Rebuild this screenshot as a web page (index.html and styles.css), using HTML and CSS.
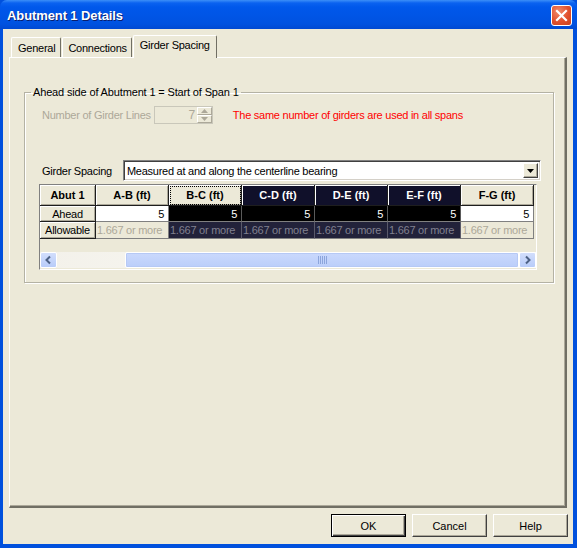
FILE: index.html
```html
<!DOCTYPE html>
<html>
<head>
<meta charset="utf-8">
<link rel="stylesheet" href="styles.css">
</head>
<body>
<div class="window">
  <div class="titlebar">
    <span class="title">Abutment 1 Details</span>
    <span class="close"><svg width="21" height="21" viewBox="0 0 21 21"><path d="M6 6 L15 15 M15 6 L6 15" stroke="#fff" stroke-width="2.2" stroke-linecap="square"/></svg></span>
  </div>
  <div class="frame">
    <div class="tabs">
      <div class="tab">General</div>
      <div class="tab conn">Connections</div>
      <div class="tab active">Girder Spacing</div>
    </div>
    <div class="panel">
      <fieldset class="group">
        <legend>Ahead side of Abutment 1 = Start of Span 1</legend>
        <div class="row row-lines">
          <span class="lbl disabled">Number of Girder Lines</span>
          <span class="spin">
            <span class="spin-val">7</span>
            <span class="spin-btns">
              <span class="sb"><svg width="7" height="4" viewBox="0 0 7 4"><path d="M3.5 0 L7 4 L0 4Z" fill="#ACA899"/></svg></span>
              <span class="sb"><svg width="7" height="4" viewBox="0 0 7 4"><path d="M0 0 L7 0 L3.5 4Z" fill="#ACA899"/></svg></span>
            </span>
          </span>
          <span class="red">The same number of girders are used in all spans</span>
        </div>
        <div class="row row-spacing">
          <span class="lbl">Girder Spacing</span>
          <span class="combo">
            <span class="combo-text">Measured at and along the centerline bearing</span>
            <span class="drop"><svg width="7" height="4" viewBox="0 0 7 4"><path d="M0 0 L7 0 L3.5 4Z" fill="#000"/></svg></span>
          </span>
        </div>
        <div class="grid">
          <table>
            <colgroup><col class="c0"><col class="c"><col class="c"><col class="c"><col class="c"><col class="c"><col class="c"></colgroup>
            <tr class="hdr">
              <th>Abut 1</th>
              <th>A-B (ft)</th>
              <th class="focus">B-C (ft)</th>
              <th class="dk">C-D (ft)</th>
              <th class="dk">D-E (ft)</th>
              <th class="dk">E-F (ft)</th>
              <th>F-G (ft)</th>
            </tr>
            <tr class="ahead">
              <th class="rh">Ahead</th>
              <td class="w">5</td>
              <td class="b">5</td>
              <td class="b">5</td>
              <td class="b">5</td>
              <td class="b">5</td>
              <td class="w">5</td>
            </tr>
            <tr class="allow">
              <th class="rh">Allowable</th>
              <td class="l">1.667 or more</td>
              <td class="n">1.667 or more</td>
              <td class="n">1.667 or more</td>
              <td class="n">1.667 or more</td>
              <td class="n">1.667 or more</td>
              <td class="l">1.667 or more</td>
            </tr>
          </table>
          <div class="hscroll">
            <span class="arrow"><svg width="17" height="16" viewBox="0 0 17 16"><path d="M10 4.5 L6.5 8 L10 11.5" stroke="#4D6185" stroke-width="2" fill="none"/></svg></span>
            <span class="track-l"></span>
            <span class="thumb"><svg width="9" height="8" viewBox="0 0 9 8"><path d="M0.5 0V8M2.5 0V8M4.5 0V8M6.5 0V8M8.5 0V8" stroke="#8CA5DC" stroke-width="1"/></svg></span>
            <span class="arrow"><svg width="17" height="16" viewBox="0 0 17 16"><path d="M7 4.5 L10.5 8 L7 11.5" stroke="#4D6185" stroke-width="2" fill="none"/></svg></span>
          </div>
        </div>
      </fieldset>
    </div>
    <div class="buttons">
      <button class="btn default">OK</button>
      <button class="btn">Cancel</button>
      <button class="btn">Help</button>
    </div>
  </div>
</div>
</body>
</html>
```
FILE: styles.css
```css
html, body {
  margin: 0;
  padding: 0;
}
body {
  width: 577px;
  height: 548px;
  overflow: hidden;
  font-family: "Liberation Sans", Arial, sans-serif;
  font-size: 11px;
  letter-spacing: -0.25px;
  color: #000;
}
.window {
  width: 577px;
  height: 548px;
  display: flex;
  flex-direction: column;
  background: #0050DD;
}
.titlebar {
  height: 29px;
  flex: none;
  display: flex;
  align-items: center;
  justify-content: space-between;
  padding: 0 5px 0 7px;
  background: linear-gradient(to bottom, #3C8FF8 0px, #0A62F0 3px, #0058EB 7px, #0055E6 15px, #0052E0 24px, #0049D2 29px);
  border-radius: 7px 7px 0 0;
  box-sizing: border-box;
}
.title {
  color: #fff;
  font-family: "Liberation Sans", Arial, sans-serif;
  font-weight: bold;
  font-size: 13px;
  letter-spacing: -0.1px;
  text-shadow: 1px 1px 0 #0A1E6E;
  margin-top: 1px;
}
.close {
  width: 21px;
  height: 21px;
  box-sizing: border-box;
  border: 1px solid #fff;
  border-radius: 3px;
  background: radial-gradient(circle at 35% 30%, #F08B6C 0, #E1502D 55%, #C8421F 100%);
  display: flex;
  margin-top: 2px;
}
.close svg {
  margin: -1px;
}
.frame {
  flex: 1;
  background: #ECE9D8;
  margin: 0 4px 4px 3px;
  display: flex;
  flex-direction: column;
}
.tabs {
  display: flex;
  align-items: flex-end;
  height: 22px;
  margin-top: 6px;
  padding-left: 8px;
  position: relative;
  z-index: 1;
}
.tab {
  height: 20px;
  box-sizing: border-box;
  padding: 3px 5px 0 6px;
  border-left: 1px solid #fff;
  border-top: 1px solid #fff;
  border-right: 1px solid #716F64;
  border-radius: 2px 2px 0 0;
  margin-right: 1px;
  background: #ECE9D8;
  line-height: 14px;
}
.tab.conn {
  padding: 3px 4px 0 5px;
}
.tab.active {
  height: 23px;
  margin-bottom: -1px;
  padding: 2px 6px 0 6px;
  background: #ECE9D8;
}
.panel {
  height: 451px;
  box-sizing: border-box;
  margin: 0 6px 0 6px;
  border-left: 1px solid #fff;
  border-top: 1px solid #fff;
  border-right: 2px solid #716F64;
  border-bottom: 2px solid #716F64;
  box-shadow: inset -1px -1px 0 #ACA899;
  padding-top: 28px;
  padding-left: 14px;
  padding-right: 11px;
}
.group {
  margin: 0;
  padding: 7px 12px 12px 14px;
  border: 1px solid #B4B2A4;
  box-shadow: 1px 1px 0 #fff, inset 1px 1px 0 #fff;
  min-width: 0;
}
.group legend {
  padding: 0 2px;
  margin-left: -8px;
  line-height: 13px;
  letter-spacing: -0.15px;
}
.row {
  display: flex;
  align-items: center;
}
.row-lines {
  height: 18px;
}
.lbl {
  margin-left: 3px;
}
.disabled {
  color: #ACA899;
}
.spin {
  margin-left: 3px;
  width: 59px;
  height: 18px;
  box-sizing: border-box;
  border: 1px solid #C9C7BA;
  display: flex;
  background: #ECE9D8;
}
.spin-val {
  flex: 1;
  text-align: right;
  color: #ACA899;
  font-size: 12px;
  line-height: 16px;
  padding-right: 2px;
}
.spin-btns {
  width: 15px;
  display: flex;
  flex-direction: column;
}
.sb {
  flex: 1;
  display: flex;
  align-items: center;
  justify-content: center;
  border: 1px solid #fff;
  border-right-color: #ACA899;
  border-bottom-color: #ACA899;
}
.red {
  color: #FF0000;
  margin-left: 20px;
}
.row-spacing {
  margin-top: 36px;
  height: 21px;
}
.combo {
  margin-left: 11px;
  flex: 1;
  height: 21px;
  box-sizing: border-box;
  border: 1px solid #808080;
  border-right-color: #fff;
  border-bottom-color: #fff;
  box-shadow: inset 1px 1px 0 #404040, inset -1px -1px 0 #D4D0C8;
  background: #fff;
  display: flex;
  align-items: center;
  padding: 0 2px 0 3px;
}
.combo-text {
  flex: 1;
}
.drop {
  width: 15px;
  height: 15px;
  box-sizing: border-box;
  background: #ECE9D8;
  border: 1px solid #fff;
  border-right-color: #404040;
  border-bottom-color: #404040;
  box-shadow: inset -1px -1px 0 #ACA899;
  display: flex;
  align-items: center;
  justify-content: center;
}
.grid {
  margin-top: 3px;
  width: 498px;
  height: 86px;
  box-sizing: border-box;
  border: 1px solid #808080;
  border-right-color: #fff;
  border-bottom-color: #fff;
  display: flex;
  flex-direction: column;
  justify-content: space-between;
}
table {
  border-collapse: separate;
  border-spacing: 0;
  table-layout: fixed;
  width: 494px;
}
col.c0 { width: 56px; }
col.c { width: 73px; }
th, td {
  padding: 0;
  box-sizing: border-box;
  white-space: nowrap;
  overflow: hidden;
}
.hdr th {
  height: 21px;
  font-weight: bold;
  font-size: 11px;
  letter-spacing: 0;
  background: #ECE9D8;
  border-right: 1px solid #1E1E1E;
  border-bottom: 1px solid #1E1E1E;
  box-shadow: inset 1px 1px 0 #fff, inset -1px -1px 0 #ACA899;
  text-align: center;
}
.hdr th.dk {
  background: #10102A;
  color: #fff;
  box-shadow: inset 1px 1px 0 #fff;
}
.hdr th.focus {
  outline: 1px dotted #000;
  outline-offset: -2px;
}
th.rh {
  font-weight: normal;
  background: #ECE9D8;
  border-right: 1px solid #1E1E1E;
  border-bottom: 1px solid #1E1E1E;
  box-shadow: inset 1px 1px 0 #fff, inset -1px -1px 0 #ACA899;
  text-align: center;
}
.ahead th, .ahead td {
  height: 16px;
}
.allow th, .allow td {
  height: 17px;
}
td {
  border-right: 1px solid #808080;
  border-bottom: 1px solid #808080;
}
td.w {
  background: #fff;
  text-align: right;
  padding-right: 4px;
}
td.b {
  background: #000;
  color: #fff;
  text-align: right;
  padding-right: 4px;
  border-right-color: #5A5A5A;
}
td.l {
  background: #ECE9D8;
  color: #ACA899;
  padding-left: 1px;
}
td.n {
  background: #22223A;
  color: #80808F;
  padding-left: 1px;
  border-right-color: #5A5A6A;
}
.hscroll {
  height: 16px;
  display: flex;
  margin-bottom: 1px;
  background: linear-gradient(to right, #F3F1EA, #FEFEFB);
}
.arrow {
  width: 17px;
  height: 16px;
  box-sizing: border-box;
  border: 1px solid #fff;
  border-radius: 2px;
  background: linear-gradient(to bottom, #D2DEFC, #B8CCF9);
  display: flex;
  align-items: center;
  justify-content: center;
}
.arrow svg {
  margin: -1px;
}
.track-l {
  width: 68px;
}
.thumb {
  flex: 1;
  box-sizing: border-box;
  border: 1px solid #fff;
  border-radius: 2px;
  background: linear-gradient(to bottom, #CAD9FD, #BBCEFA);
  box-shadow: inset 0 0 0 1px #B6C9F5;
  display: flex;
  align-items: center;
  justify-content: center;
}
.buttons {
  display: flex;
  justify-content: flex-end;
  gap: 6px;
  margin-top: 6px;
  padding-right: 5px;
}
.btn {
  width: 75px;
  height: 23px;
  box-sizing: border-box;
  font-family: "Liberation Sans", Arial, sans-serif;
  font-size: 11px;
  background: #ECE9D8;
  border: 1px solid #fff;
  border-right-color: #404040;
  border-bottom-color: #404040;
  box-shadow: inset -1px -1px 0 #ACA899;
  padding: 0;
  color: #000;
}
.btn.default {
  border: 1px solid #000;
  box-shadow: inset 1px 1px 0 #fff, inset -1px -1px 0 #404040, inset -2px -2px 0 #ACA899;
}
```
